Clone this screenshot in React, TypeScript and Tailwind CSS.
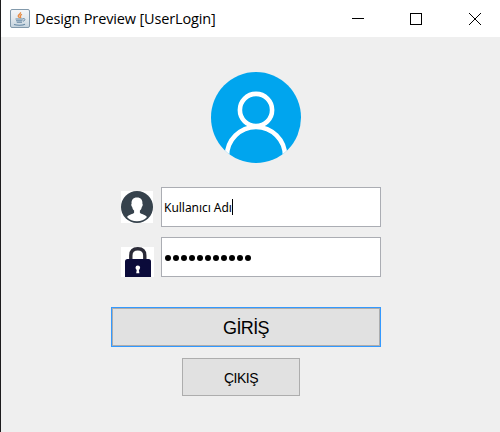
function JavaIcon() {
  return (
    <svg width="20" height="20" viewBox="0 0 20 20" className="block">
      <defs>
        <linearGradient id="tile" x1="0" y1="0" x2="0" y2="1">
          <stop offset="0" stopColor="#f4f6f8" />
          <stop offset="0.5" stopColor="#e3e9ed" />
          <stop offset="1" stopColor="#c3d2dd" />
        </linearGradient>
      </defs>
      <rect x="0.5" y="0.5" width="19" height="18" rx="1.5" fill="url(#tile)" stroke="#8299ab" />
      <path d="M10.5 3.2c.8 1.6-2.6 2.3-2.3 3.9.1.8 1.2 1.1 1.2 2M12 5.3c-1.8.7-2.3 1.4-1.5 2.3.4.5.3 1-.2 1.5" fill="none" stroke="#e8893f" strokeWidth="1.3" />
      <path d="M5.5 10h7.5M6 11.8h6.500M6.800 13.300h5.200M4 15.500c3 1 8.500 1 11-.3" fill="none" stroke="#6587a3" strokeWidth="1.1" />
      <path d="M13 9.700c2.600-.6 2.600 2 0 2.500" fill="none" stroke="#6587a3" />
    </svg>
  );
}

function Avatar() {
  return (
    <svg width="90" height="91" viewBox="0 0 90 91" className="block">
      <defs>
        <clipPath id="disc">
          <ellipse cx="45" cy="45.500" rx="45" ry="45.500" />
        </clipPath>
      </defs>
      <g clipPath="url(#disc)">
        <rect width="90" height="91" fill="#00a5ee" />
        <circle cx="45" cy="38" r="16.100" fill="none" stroke="#fff" strokeWidth="4.600" />
        <path d="M16 88V84A29 29 0 0 1 74 84V88" fill="none" stroke="#fff" strokeWidth="4.600" />
      </g>
    </svg>
  );
}

function UserIcon() {
  return (
    <svg width="32" height="32" viewBox="0 0 32 32" className="block bg-white">
      <circle cx="16" cy="16" r="16" fill="#36424c" />
      <path d="M16 6.500c-4 0-5.800 2.700-5.400 6.300-.7.300-.3 2.600.6 3.100.3 1.800 1 2.800 1.900 3.600v2.300c-1 1.400-5.600 1.700-7.100 4.300C8.500 29 12 30.300 16 30.300s7.500-1.300 10-4.200c-1.500-2.600-6.100-2.900-7.100-4.300v-2.300c.9-.8 1.600-1.800 1.900-3.600.9-.5 1.300-2.800.6-3.100.4-3.600-1.400-6.300-5.400-6.300z" fill="#fff" />
    </svg>
  );
}

function LockIcon() {
  return (
    <svg width="33" height="30" viewBox="0 0 33 30" className="block bg-white">
      <path d="M9.800 13V8.500C9.800 4 12.500 1.700 16.800 1.700S23.800 4 23.800 8.500V13" fill="none" stroke="#2b2b38" strokeWidth="3.400" />
      <path d="M4 30V14.500q0-2.500 2.500-2.500h21q2.500 0 2.500 2.500v15.500z" fill="#0b0b3a" />
      <circle cx="16.800" cy="20.800" r="2.300" fill="#fff" />
      <path d="M16 21h1.600l.8 5.300h-3.200z" fill="#fff" />
    </svg>
  );
}

export default function App() {
  return (
    <div className="flex h-[432px] w-[500px] flex-col overflow-hidden border-l border-[#1c1b1d] bg-[#efefef] text-black">
      <header className="flex h-[37px] shrink-0 items-center bg-white pl-[9px]">
        <JavaIcon />
        <h1 className="ml-[5px] flex-1 whitespace-nowrap font-['Open_Sans',sans-serif] text-[14.500px] leading-5 tracking-[-0.140px]">
          Design Preview [UserLogin]
        </h1>
        <div className="flex items-center gap-[46px] pr-[19px]">
          <svg width="12" height="12" className="block"><path d="M0 5.500h12" stroke="#000" /></svg>
          <svg width="12" height="12" className="block"><rect x="0.500" y="0.500" width="11" height="11" fill="none" stroke="#000" /></svg>
          <svg width="12" height="12" className="ml-[1px] block"><path d="M0 0l12 12M12 0L0 12" stroke="#000" /></svg>
        </div>
      </header>
      <main className="flex flex-col pl-[110px] pt-[35px]">
        <div className="ml-[100px]"><Avatar /></div>
        <div className="mt-6 flex items-start pl-[10px]">
          <div className="mt-1"><UserIcon /></div>
          <div className="ml-2 flex h-10 w-[220px] items-center border border-[#abadb3] bg-white pl-[2px]">
            <span className="whitespace-nowrap pt-px font-['Noto_Sans',sans-serif] text-[12px] leading-4 tracking-[-0.040px]">Kullanıcı Adı</span>
            <span className="h-4 w-px bg-black" />
          </div>
        </div>
        <div className="mt-[10px] flex items-end pl-[10px]">
          <LockIcon />
          <div className="ml-[7px] flex h-10 w-[220px] items-center gap-[2px] border border-[#abadb3] bg-white pl-[3px] pt-[2px]">
            {Array.from({ length: 11 }, (_, i) => (
              <span key={i} className="h-[6px] w-[6px] rounded-full bg-black" />
            ))}
          </div>
        </div>
        <button className="mt-[30px] flex h-10 w-[270px] items-center justify-center border border-[#3399ff] bg-[#e1e1e1] p-0">
          <span className="flex h-full w-full items-center justify-center border border-[#adadad] pt-[2px] font-['Liberation_Sans',Arial,sans-serif] text-[18px] leading-5 tracking-[-0.600px]">
            GİRİŞ
          </span>
        </button>
        <button className="ml-[71px] mt-[11px] flex h-[38px] w-[118px] items-center justify-center border border-[#adadad] bg-[#e1e1e1] pt-[2px] font-['Liberation_Sans',Arial,sans-serif] text-[14px] leading-4 tracking-[-0.500px]">
          ÇIKIŞ
        </button>
      </main>
    </div>
  );
}
